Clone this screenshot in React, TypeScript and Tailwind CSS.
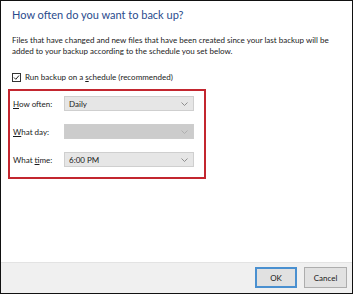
import React from "react";

const font = { fontFamily: 'Lato, "Noto Sans", sans-serif' };

const Chevron: React.FC<{ disabled?: boolean }> = ({ disabled }) => (
  <svg width="7" height="4" viewBox="0 0 7 4" className="shrink-0">
    <polyline
      points="0.5,0.5 3.5,3.5 6.5,0.5"
      fill="none"
      stroke={disabled ? "#ababab" : "#858585"}
      strokeWidth="0.9"
    />
  </svg>
);

const Select: React.FC<{ value?: string; disabled?: boolean }> = ({
  value,
  disabled,
}) => (
  <div
    className={`flex h-[15px] w-[130px] items-center justify-between border pl-[4px] pr-[5px] text-[8px] text-[#1a1a1a] ${
      disabled
        ? "border-[#cdcdcd] bg-[#cccccc]"
        : "border-[#cfcfcf] bg-[#e6e6e6]"
    }`}
  >
    <span>{value}</span>
    <Chevron disabled={disabled} />
  </div>
);

const Row: React.FC<{ label: React.ReactNode; children: React.ReactNode }> = ({
  label,
  children,
}) => (
  <div className="flex items-center">
    <span className="w-[51px] text-[8px] text-[#1a1a1a]">{label}</span>
    {children}
  </div>
);

export default function App() {
  return (
    <div
      className="flex h-[294px] w-[353px] flex-col border border-[#111] bg-white"
      style={font}
    >
      <div className="px-[11px] pt-[6px]">
        <h1 className="text-[11px] leading-[16px] text-[#2a4b8d]">
          How often do you want to back up?
        </h1>
        <p className="mt-[12px] text-[8px] leading-[11px] text-[#1a1a1a]">
          Files that have changed and new files that have been created since your
          last backup will be added to your backup according to the schedule you
          set below.
        </p>
        <div className="mt-[14px] flex items-center gap-[4px]">
          <svg width="9" height="9" viewBox="0 0 9 9">
            <rect x="0.5" y="0.5" width="8" height="8" fill="#fff" stroke="#333" />
            <polyline
              points="2,4.5 3.8,6.3 7,2.5"
              fill="none"
              stroke="#222"
              strokeWidth="1"
            />
          </svg>
          <span className="text-[8px] text-[#1a1a1a]">
            Run backup on a <span className="underline">s</span>chedule
            (recommended)
          </span>
        </div>
      </div>

      <div className="ml-[7px] mt-[6px] flex h-[90px] w-[198px] flex-col gap-[13px] border-2 border-[#c3262f] pl-[3px] pt-[5px]">
        <Row
          label={
            <>
              <span className="underline">H</span>ow often:
            </>
          }
        >
          <Select value="Daily" />
        </Row>
        <Row
          label={
            <>
              <span className="underline">W</span>hat day:
            </>
          }
        >
          <Select disabled />
        </Row>
        <Row
          label={
            <>
              What <span className="underline">t</span>ime:
            </>
          }
        >
          <Select value="6:00 PM" />
        </Row>
      </div>

      <div className="flex-1" />

      <div className="flex h-[31px] items-start justify-end gap-[7px] border-t border-[#e3e3e3] bg-[#f0f0f0] pr-[5px] pt-[4px]">
        <button className="h-[21px] w-[42px] border-2 border-[#4a90d0] bg-[#e1e1e1] text-[8px] text-[#1a1a1a]">
          OK
        </button>
        <button className="h-[21px] w-[43px] border border-[#adadad] bg-[#e1e1e1] text-[8px] text-[#1a1a1a]">
          Cancel
        </button>
      </div>
    </div>
  );
}
